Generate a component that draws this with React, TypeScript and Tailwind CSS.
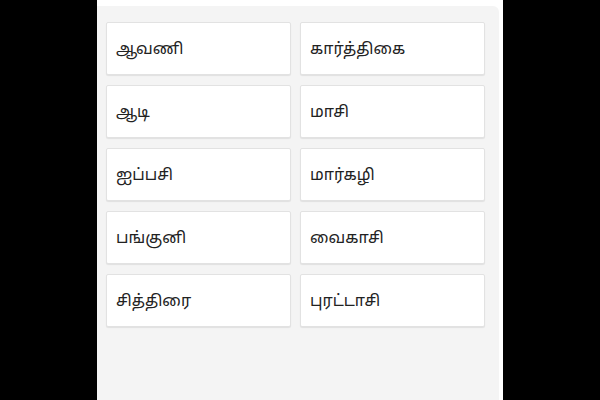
const months = [
  'ஆவணி',
  'கார்த்திகை',
  'ஆடி',
  'மாசி',
  'ஐப்பசி',
  'மார்கழி',
  'பங்குனி',
  'வைகாசி',
  'சித்திரை',
  'புரட்டாசி',
]

export default function App() {
  return (
    <div className="flex h-[400px] w-[600px] justify-center bg-black">
      <div className="h-full w-[406px] bg-white pt-[6px]">
        <div className="h-full w-[402px] rounded-tr-md bg-[#f4f4f4] pl-[9px] pt-[16px]">
          <div className="grid w-[379px] grid-cols-2 gap-x-[9px] gap-y-[10px]">
            {months.map(name => (
              <div
                key={name}
                className="flex h-[53px] items-center rounded-[2px] border border-[#e2e2e2] bg-white px-[9px] pt-[3px] shadow-[0_1px_1px_rgba(0,0,0,0.08)]"
              >
                <span className="text-[16px] text-[#222] [font-family:'Noto_Sans_Tamil','Lohit_Tamil','Noto_Sans',sans-serif]">
                  {name}
                </span>
              </div>
            ))}
          </div>
        </div>
      </div>
    </div>
  )
}
